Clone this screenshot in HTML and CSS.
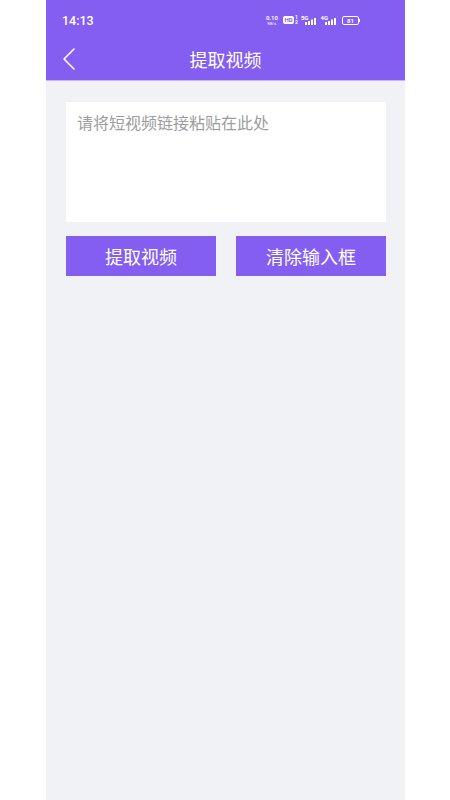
FILE: index.html
```html
<!DOCTYPE html>
<html lang="zh">
<head>
<meta charset="utf-8">
<link rel="stylesheet" href="styles.css">
</head>
<body>
<div class="phone">
  <header class="top">
    <div class="status">
      <span class="time">14:13</span>
      <div class="icons">
        <span class="speed"><b>0.10</b><i>KB/s</i></span>
        <span class="hd">HD</span><span class="hdn"><b>1</b><b>2</b></span>
        <span class="sig"><em>5G</em><svg width="12" height="7" viewBox="0 0 12 7"><rect x="0" y="4" width="2" height="3" fill="#fff"/><rect x="3" y="3" width="2" height="4" fill="#fff"/><rect x="6" y="1.5" width="2" height="5.5" fill="#fff"/><rect x="9" y="0" width="2" height="7" fill="#fff"/></svg></span>
        <span class="sig"><em>4G</em><svg width="12" height="7" viewBox="0 0 12 7"><rect x="0" y="4" width="2" height="3" fill="#fff"/><rect x="3" y="3" width="2" height="4" fill="#fff"/><rect x="6" y="1.5" width="2" height="5.5" fill="#fff"/><rect x="9" y="0" width="2" height="7" fill="#fff"/></svg></span>
        <span class="bat"><span class="batbody">81</span><span class="battip"></span></span>
      </div>
    </div>
    <div class="nav">
      <svg class="back" width="14" height="24" viewBox="0 0 14 24"><path d="M12 2 L2 12 L12 22" fill="none" stroke="#fff" stroke-width="1.6" stroke-linecap="round" stroke-linejoin="round"/></svg>
      <h1 class="title">提取视频</h1>
    </div>
  </header>
  <main class="content">
    <div class="input">请将短视频链接粘贴在此处</div>
    <div class="actions">
      <button class="btn">提取视频</button>
      <button class="btn">清除输入框</button>
    </div>
  </main>
</div>
</body>
</html>
```
FILE: styles.css
```css
html, body { margin: 0; padding: 0; background: #fff; }
body { font-family: "Noto Sans CJK SC", "Noto Sans", Roboto, sans-serif; }
.phone {
  margin-left: 46px;
  width: 359px;
  height: 800px;
  background: #f0f2f6;
  display: flex;
  flex-direction: column;
}
.top {
  background: #845ef0;
  height: 80px;
  border-bottom: 1px solid #c6b6f7;
  display: flex;
  flex-direction: column;
}
.status {
  height: 40px;
  display: flex;
  align-items: center;
  justify-content: space-between;
  padding: 0 45px 0 16px;
  color: #fff;
}
.time { font-family: Roboto, "Noto Sans", sans-serif; font-size: 12.5px; font-weight: 500; margin-top: 1px; }
.icons { display: flex; align-items: center; gap: 3px; }
.speed { display: flex; flex-direction: column; align-items: center; line-height: 5px; font-family: Roboto, sans-serif; }
.speed b { font-size: 6px; font-weight: 600; }
.speed i { font-style: normal; font-size: 4px; margin-top: 1px; }
.hd { background: #fff; color: #845ef0; font-family: Roboto, sans-serif; font-size: 6px; font-weight: 700; border-radius: 2px; padding: 0 1.5px; line-height: 8px; margin-left: 2px; }
.hdn { display: flex; flex-direction: column; font-family: Roboto, sans-serif; font-size: 5px; line-height: 5px; margin-left: -2px; }
.hdn b { font-weight: 700; }
.sig { display: flex; align-items: flex-end; font-family: Roboto, sans-serif; position: relative; padding-top: 2px; }
.sig em { font-style: normal; font-size: 6px; font-weight: 700; line-height: 6px; align-self: flex-start; margin-right: -4px; margin-top: -3px; }
.sig svg { display: block; margin-left: 1px; }
.bat { display: flex; align-items: center; margin-left: 2px; }
.batbody { border: 1px solid #fff; border-radius: 2px; height: 7px; width: 15px; font-family: Roboto, sans-serif; font-size: 6px; line-height: 7px; text-align: center; font-weight: 700; }
.battip { width: 1px; height: 3px; background: #fff; }
.nav {
  height: 40px;
  display: flex;
  align-items: center;
  justify-content: center;
  position: relative;
}
.back { position: absolute; left: 16px; top: 7px; }
.title { margin: 0; font-size: 18px; font-weight: 400; color: #fff; line-height: 24px; margin-top: -2px; }
.content { padding: 21px 19px 0 20px; display: flex; flex-direction: column; gap: 14px; }
.input {
  background: #fff;
  height: 120px;
  box-sizing: border-box;
  padding: 9px 11px;
  font-size: 16px;
  line-height: 22px;
  color: #9c9c9c;
}
.actions { display: flex; justify-content: space-between; }
.btn {
  width: 150px;
  height: 40px;
  border: 0;
  background: #845ef0;
  color: #fff;
  font-family: "Noto Sans CJK SC", sans-serif;
  font-size: 18px;
  padding: 0;
}
```
